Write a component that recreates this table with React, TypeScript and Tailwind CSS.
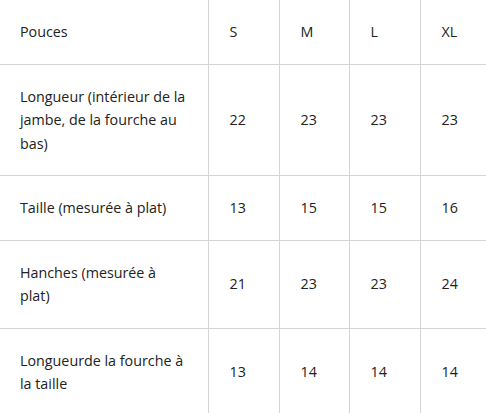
const rows: [string, string[]][] = [
  ["Longueur (intérieur de la jambe, de la fourche au bas)", ["22", "23", "23", "23"]],
  ["Taille (mesurée à plat)", ["13", "15", "15", "16"]],
  ["Hanches (mesurée à plat)", ["21", "23", "23", "24"]],
  ["Longueurde la fourche à la taille", ["13", "14", "14", "14"]],
];

const sizes = ["S", "M", "L", "XL"];

export default function App() {
  return (
    <div className="w-[486px] h-[413px] overflow-hidden bg-white">
      <table
        className="table-fixed border-collapse w-[490px] text-[14.3px] leading-[23.5px] text-[#222]"
        style={{ fontFamily: "'Open Sans', Lato, sans-serif" }}
      >
        <colgroup>
          <col className="w-[208px]" />
          <col className="w-[71px]" />
          <col className="w-[70px]" />
          <col className="w-[71px]" />
          <col className="w-[70px]" />
        </colgroup>
        <thead>
          <tr>
            <td className="border-r border-b border-[#d4d4d4] pl-5 pr-5 py-5 text-left font-normal">Pouces</td>
            {sizes.map((s) => (
              <td key={s} className="border-r border-b border-[#d4d4d4] pl-[21px] pr-2 py-5 text-left font-normal">
                {s}
              </td>
            ))}
          </tr>
        </thead>
        <tbody>
          {rows.map(([label, vals]) => (
            <tr key={label}>
              <td className="border-r border-b border-[#d4d4d4] pl-5 pr-5 py-5 align-middle">{label}</td>
              {vals.map((v, i) => (
                <td key={i} className="border-r border-b border-[#d4d4d4] pl-[21px] pr-2 py-5 align-middle">
                  {v}
                </td>
              ))}
            </tr>
          ))}
        </tbody>
      </table>
    </div>
  );
}
